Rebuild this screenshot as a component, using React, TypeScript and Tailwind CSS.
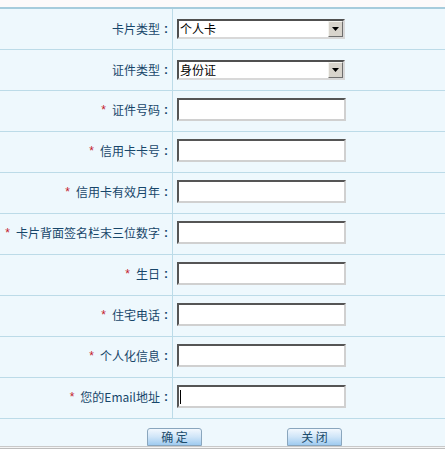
import React from "react";

const FONT = { fontFamily: '"Noto Sans CJK SC", "Liberation Sans", sans-serif' };

type Row = { label: string; star?: boolean; kind: "select" | "input"; value?: string; caret?: boolean };

const rows: Row[] = [
  { label: "卡片类型", kind: "select", value: "个人卡" },
  { label: "证件类型", kind: "select", value: "身份证" },
  { label: "证件号码", star: true, kind: "input" },
  { label: "信用卡卡号", star: true, kind: "input" },
  { label: "信用卡有效月年", star: true, kind: "input" },
  { label: "卡片背面签名栏末三位数字", star: true, kind: "input" },
  { label: "生日", star: true, kind: "input" },
  { label: "住宅电话", star: true, kind: "input" },
  { label: "个人化信息", star: true, kind: "input" },
  { label: "您的Email地址", star: true, kind: "input", caret: true },
];

function Select({ value }: { value: string }) {
  return (
    <div className="flex h-[20px] w-[168px] items-stretch border-2 border-t-[#505050] border-l-[#505050] border-r-[#d8d8d8] border-b-[#d8d8d8] bg-white">
      <div className="flex flex-1 items-center pl-[1px] text-[12px] leading-none text-black">{value}</div>
      <div className="flex w-[15px] items-center justify-center border border-t-[#f4f4f0] border-l-[#f4f4f0] border-r-[#6e6e6e] border-b-[#6e6e6e] bg-[#d8d4cc]">
        <svg width="7" height="4" viewBox="0 0 7 4">
          <polygon points="0,0 7,0 3.5,4" fill="#000" />
        </svg>
      </div>
    </div>
  );
}

function Input({ caret }: { caret?: boolean }) {
  return (
    <div className="flex h-[23px] w-[169px] items-center border-2 border-t-[#555555] border-l-[#555555] border-r-[#d0d0d0] border-b-[#d0d0d0] bg-white pl-[1px]">
      {caret && <span className="block h-[14px] w-[1px] bg-black" />}
    </div>
  );
}

function Btn({ text }: { text: string }) {
  return (
    <div className="flex h-[18px] w-[55px] items-center justify-center rounded-t-[3px] border border-[#8aa6bd] bg-gradient-to-b from-[#f2f8fe] via-[#cfe5f8] to-[#9fcbf0] text-[12px] leading-none text-[#1c4c6c]">
      {text}
    </div>
  );
}

export default function App() {
  return (
    <div className="h-[449px] w-[445px] overflow-hidden bg-[#fdfafa]" style={FONT}>
      <div className="h-[7px]" />
      <div className="border-t-2 border-[#a7ccdc] bg-[#eef8fd]">
        {rows.map((r) => (
          <div key={r.label} className="flex h-[41px] border-b border-[#bcdbe8]">
            <div
              className={`flex w-[173px] items-center justify-end border-r border-[#bcdbe8] text-[12px] text-[#17466a] ${
                r.kind === "input" ? "pb-[3px]" : ""
              }`}
            >
              {r.star && (
                <span className="mr-[6px] text-[#c4202c]" style={{ fontFamily: '"Liberation Sans", sans-serif' }}>
                  *
                </span>
              )}
              <span>{r.label}</span>
              <span
                className="inline-block w-[12px] text-center font-bold"
                style={{ fontFamily: '"Liberation Sans", sans-serif' }}
              >
                :
              </span>
            </div>
            <div className={`flex flex-1 items-center pl-[4px] ${r.kind === "input" ? "pb-[3px]" : ""}`}>
              {r.kind === "select" ? <Select value={r.value!} /> : <Input caret={r.caret} />}
            </div>
          </div>
        ))}
        <div className="flex h-[27px] items-end gap-[85px] pl-[147px]">
          <Btn text="确 定" />
          <Btn text="关 闭" />
        </div>
      </div>
      <div className="h-[1px] bg-[#c9c9c9]" />
      <div className="h-[1px] bg-[#f4f4f4]" />
      <div className="h-[1px] bg-[#bdbdbd]" />
    </div>
  );
}
